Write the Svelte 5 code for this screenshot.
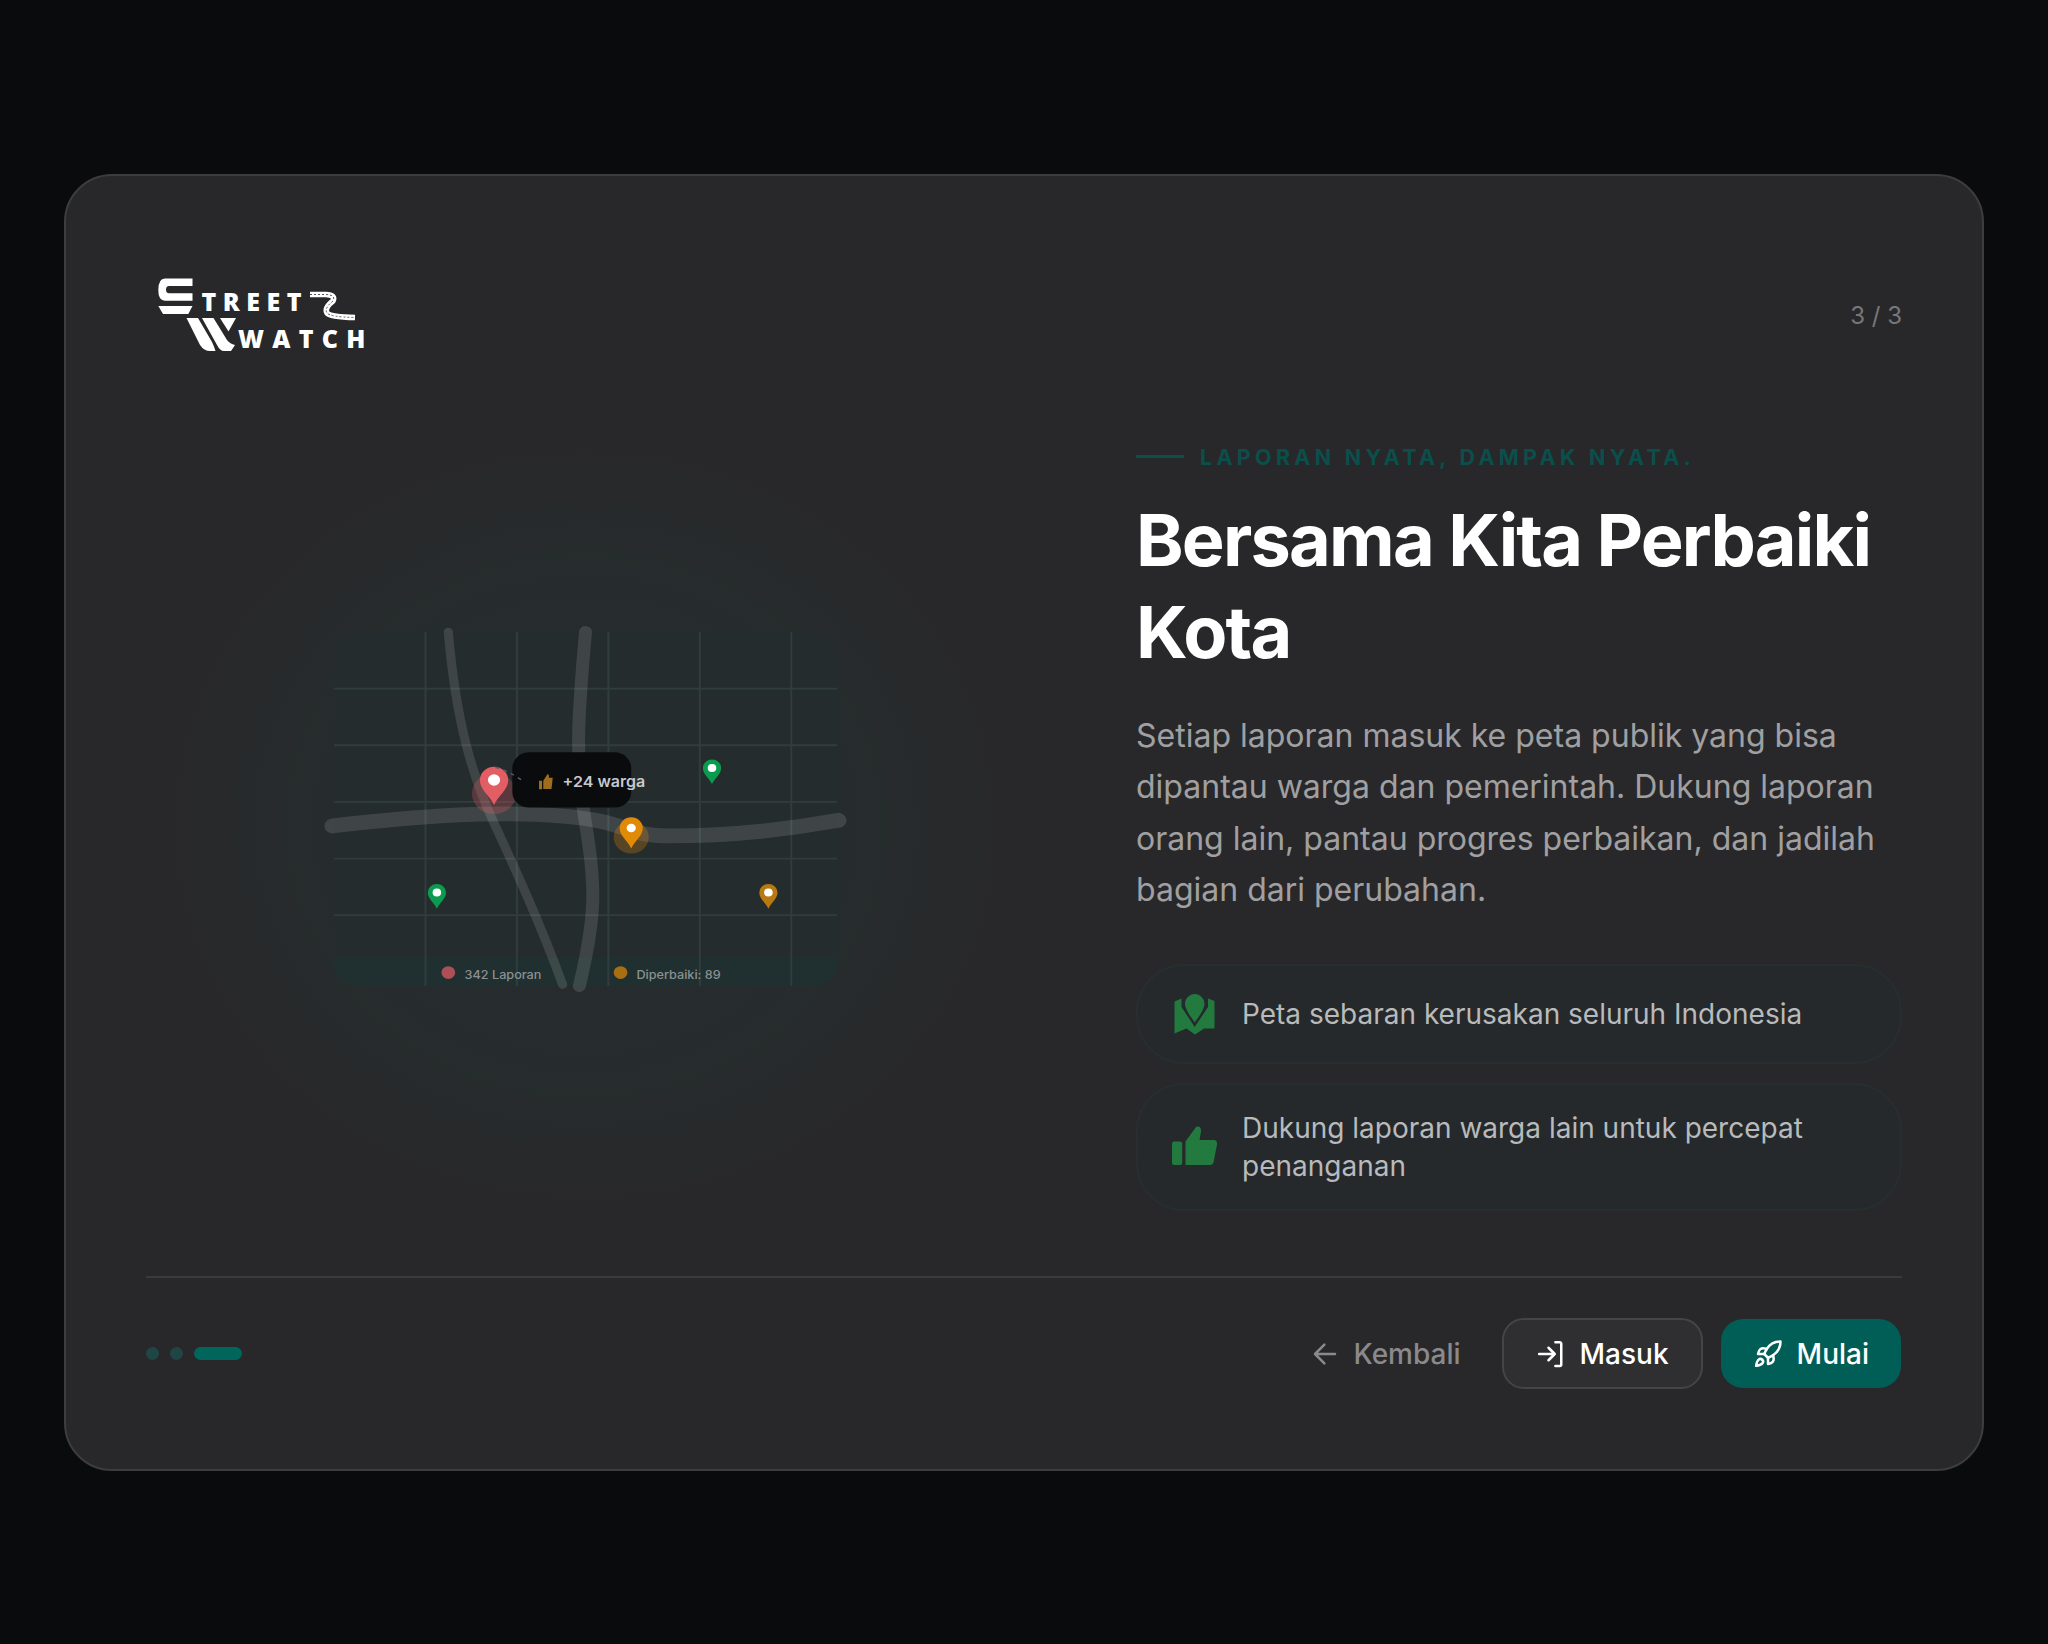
<script>
  // map pins in map coordinates (viewBox 330 x 250)
  const pins = [
    { x: 105, y: 104.5, r: 9.3, color: '#e35d65', dot: 4, halo: { y: 114, r: 14.5 } },
    { x: 195, y: 138.5, r: 7.6, color: '#e08a08', dot: 3, halo: { y: 145, r: 11.5 } },
    { x: 248, y: 96, r: 6, color: '#0b9b4f', dot: 2.8 },
    { x: 67.5, y: 184, r: 6, color: '#0b9b4f', dot: 2.8 },
    { x: 285, y: 184, r: 6, color: '#b87a10', dot: 2.8 }
  ];

  const gridX = [60, 120, 180, 240, 300];
  const gridY = [40, 80, 120, 160, 200];

  function pinPath(p) {
    const { x, y, r } = p;
    const tip = r * 1.9;
    return `M${x} ${y + tip}C${x - r * 0.3} ${y + tip * 0.62} ${x - r} ${y + r * 0.75} ${x - r} ${y}A${r} ${r} 0 0 1 ${x + r} ${y}C${x + r} ${y + r * 0.75} ${x + r * 0.3} ${y + tip * 0.62} ${x} ${y + tip}Z`;
  }
</script>

<div class="page">
  <div class="card">
    <header class="top">
      <svg class="logo" viewBox="16 6 220 118" aria-label="Street Watch">
        <path class="logo-fill" d="M35 28.500H62.500V36H39Q36 36 36 39.500Q36 43.300 39 43.300H62.500V50.700H35Q28.300 50.700 28.300 40Q28.300 28.500 35 28.500Z" />
        <path class="logo-fill" d="M28.300 56H62.500L58.300 64H33Z" />
        <path class="logo-fill" d="M56.500 68H68L82 92Q84 96 85.500 101H80Q74 101 70 95Z" />
        <path class="logo-fill" d="M72 68H83.500L97 90Q100 94 105 95L101 101H94Q90 101 87 95Z" />
        <path class="logo-fill" d="M90 68H106L98.500 81.500Z" />
        <text class="logo-text" x="71.500" y="61">TREET</text>
        <text class="logo-text wide" x="108" y="98">WATCH</text>
        <path class="logo-road" d="M180 44.500H196Q206 45 203 51Q194 58 197 63Q200 67 225 67.500" />
        <path class="logo-road-line" d="M180 44.500H196Q206 45 203 51Q194 58 197 63Q200 67 225 67.500" />
      </svg>
      <span class="count">3 / 3</span>
    </header>

    <main class="content">
      <div class="visual">
        <svg class="map" viewBox="0 0 330 250" preserveAspectRatio="none">
          <rect class="map-bg" width="330" height="250" rx="16" />
          <path class="map-legend-bg" d="M0 230H330V234A16 16 0 0 1 314 250H16A16 16 0 0 1 0 234Z" />
          {#each gridX as x}
            <line class="grid" x1={x} y1="0" x2={x} y2="250" />
          {/each}
          {#each gridY as y}
            <line class="grid" x1="0" y1={y} x2="330" y2={y} />
          {/each}
          <path class="road" stroke-width="10.500" d="M-1 137C55 130 105 126 150 130S190 144 220 144S290 141 331 133" />
          <path class="road" stroke-width="6" d="M75 0C80 62 90 100 105 135S135 205 150 249" />
          <path class="road" stroke-width="8.500" d="M165 0C160 60 158 90 165 135S172 200 161 250" />

          {#each pins as p}
            {#if p.halo}
              <circle cx={p.x} cy={p.halo.y} r={p.halo.r} fill={p.color} opacity="0.28" />
            {/if}
            <path d={pinPath(p)} fill={p.color} />
            <circle cx={p.x} cy={p.y} r={p.dot} fill="#fff" />
          {/each}

          <rect class="tip" x="117" y="85" width="78" height="39" rx="11" />
          <path class="tip-line" d="M106 95.500Q114 98 123 104.500" />
          <path class="tip-thumb" d="M134.500 105H136.500V111H134.500ZM137.300 105L140 100.500Q141.300 100.200 141 103H143.500L142.700 110.800H137.300Z" />
          <text class="tip-text" x="150" y="109.500">+24 warga</text>

          <circle cx="75" cy="240.500" r="4.500" fill="#ad4f58" />
          <text class="legend" x="85.700" y="245.200">342 Laporan</text>
          <circle cx="188" cy="240.500" r="4.500" fill="#a86f12" />
          <text class="legend" x="198.400" y="245.200">Diperbaiki: 89</text>
        </svg>
      </div>

      <div class="copy">
        <div class="eyebrow"><span class="dash"></span>LAPORAN NYATA, DAMPAK NYATA.</div>
        <h1>Bersama Kita Perbaiki Kota</h1>
        <p class="lead">Setiap laporan masuk ke peta publik yang bisa dipantau warga dan pemerintah. Dukung laporan orang lain, pantau progres perbaikan, dan jadilah bagian dari perubahan.</p>
        <div class="features">
          <div class="feature">
            <svg class="feature-icon" viewBox="0 0 48 48">
              <path d="M4.500 11.500L11.500 8.500V17L24.700 37L38 17V8.500L44.500 11V38.500L34 38.500L25 44.500L16.500 38.500L4.500 43.500Z" />
              <path d="M24.700 4C30 4 34.500 8.500 34.500 14C34.500 19 28 28 24.700 32.500C21.500 28 15 19 15 14C15 8.500 19.500 4 24.700 4Z" />
            </svg>
            <span>Peta sebaran kerusakan seluruh Indonesia</span>
          </div>
          <div class="feature">
            <svg class="feature-icon" viewBox="0 0 48 48">
              <rect x="2" y="18.500" width="10.200" height="23.500" rx="2" />
              <path d="M15.500 18.500L26 4C29 2.500 31.500 4.500 31 8.500L29.500 17H43.500C46 17 47.500 19 47 21.500L43.500 39.500C43 41 41.500 42 40 42H15.500Z" />
            </svg>
            <span>Dukung laporan warga lain untuk percepat penanganan</span>
          </div>
        </div>
      </div>
    </main>

    <footer class="bottom">
      <div class="dots">
        <span class="dot"></span>
        <span class="dot"></span>
        <span class="dot active"></span>
      </div>
      <div class="actions">
        <button class="btn back">
          <svg viewBox="0 0 24 24"><path d="M20 12H4m7.500 7.500L4 12l7.500-7.500" /></svg>
          Kembali
        </button>
        <button class="btn login">
          <svg viewBox="0 0 24 24"><path d="M15.500 2.500h3.500a1.200 1.200 0 0 1 1.200 1.200v16.600a1.200 1.200 0 0 1-1.200 1.200h-3.500M10 17l5-5-5-5M15 12H2.500" /></svg>
          Masuk
        </button>
        <button class="btn start">
          <svg viewBox="0 0 24 24">
            <path d="M4.500 16.500c-1.500 1.260-2 5-2 5s3.740-.5 5-2c.710-.840.700-2.130-.090-2.910a2.180 2.180 0 0 0-2.910-.090z" />
            <path d="m12 15-3-3a22 22 0 0 1 2-3.950A12.880 12.880 0 0 1 22 2c0 2.720-.780 7.500-6 11a22.350 22.350 0 0 1-4 2z" />
            <path d="M9 12H4s.550-3.030 2-4c1.620-1.080 5 0 5 0" />
            <path d="M12 15v5s3.030-.550 4-2c1.080-1.620 0-5 0-5" />
          </svg>
          Mulai
        </button>
      </div>
    </footer>
  </div>
</div>

<style>
  :global(body) {
    margin: 0;
    background: #090b0d;
    font-family: Inter, "Liberation Sans", sans-serif;
  }

  .page {
    box-sizing: border-box;
    min-height: 1644px;
    padding-top: 1px;
    display: flex;
    align-items: center;
    justify-content: center;
  }

  .card {
    box-sizing: border-box;
    width: 1920px;
    height: 1297px;
    padding: 80px;
    display: flex;
    flex-direction: column;
    background: #28282a;
    border: 2px solid #3d3d3f;
    border-radius: 48px;
  }

  .top {
    height: 118px;
    display: flex;
    align-items: center;
    justify-content: space-between;
  }

  .logo {
    width: 220px;
    height: 118px;
    overflow: visible;
  }

  .logo-fill {
    fill: #fff;
  }

  .logo-text {
    font-family: "Open Sans", sans-serif;
    font-weight: 800;
    font-size: 25px;
    letter-spacing: 6.500px;
    fill: #fff;
  }

  .logo-text.wide {
    letter-spacing: 8.300px;
  }

  .logo-road {
    fill: none;
    stroke: #fff;
    stroke-width: 5.500;
  }

  .logo-road-line {
    fill: none;
    stroke: #555;
    stroke-width: 1;
    stroke-dasharray: 2 2;
  }

  .count {
    font-size: 24px;
    color: #77777a;
  }

  .content {
    flex: 1;
    display: flex;
    align-items: center;
    justify-content: space-between;
    min-height: 0;
  }

  .visual {
    width: 879px;
    height: 800px;
    flex: none;
    display: flex;
    align-items: center;
    justify-content: center;
    padding-bottom: 32px;
    box-sizing: border-box;
    background: radial-gradient(closest-side, rgba(0, 120, 110, 0.055) 55%, rgba(0, 120, 110, 0));
  }

  .map {
    width: 503px;
    height: 354px;
    overflow: visible;
  }

  .map-bg {
    fill: #252c2e;
  }

  .map-legend-bg {
    fill: #203030;
  }

  .grid {
    stroke: #303d3e;
    stroke-width: 1.300;
  }

  .road {
    fill: none;
    stroke: rgba(255, 255, 255, 0.12);
    stroke-linecap: round;
  }

  .tip {
    fill: #090b0d;
  }

  .tip-line {
    fill: none;
    stroke: #5a5d60;
    stroke-width: 1;
    stroke-dasharray: 2.500 3;
  }

  .tip-thumb {
    fill: #a06c1e;
  }

  .tip-text {
    font-size: 10.500px;
    font-weight: 600;
    fill: #c5c9cd;
  }

  .legend {
    font-size: 8.300px;
    font-weight: 500;
    fill: #8a9093;
  }

  .copy {
    width: 766px;
    flex: none;
    padding-top: 5px;
  }

  .eyebrow {
    display: flex;
    align-items: center;
    gap: 16px;
    font-size: 21.500px;
    font-weight: 700;
    letter-spacing: 0.2em;
    color: #0a4f4b;
    line-height: 24px;
  }

  .dash {
    width: 48px;
    height: 3px;
    background: #0a4f4b;
  }

  h1 {
    margin: 25px 0 32px;
    font-size: 72px;
    font-weight: 700;
    line-height: 92px;
    letter-spacing: -0.025em;
    color: #fff;
  }

  .lead {
    margin: 0 0 48px;
    font-size: 32px;
    line-height: 51.500px;
    color: #a0a0a2;
  }

  .features {
    display: flex;
    flex-direction: column;
    gap: 19px;
  }

  .feature {
    display: flex;
    align-items: center;
    gap: 24px;
    padding: 24px 32px;
    background: #25292b;
    border: 2px solid #272e30;
    border-radius: 48px;
    font-size: 28px;
    line-height: 38px;
    color: #b8babc;
  }

  .feature-icon {
    width: 48px;
    height: 48px;
    flex: none;
    fill: #237a3f;
  }

  .bottom {
    margin-top: auto;
    border-top: 2px solid #3a3a3c;
    padding-top: 40px;
    display: flex;
    align-items: center;
    justify-content: space-between;
  }

  .dots {
    display: flex;
    align-items: center;
    gap: 11px;
  }

  .dot {
    width: 13px;
    height: 13px;
    border-radius: 7px;
    background: #1f4644;
  }

  .dot.active {
    width: 48px;
    background: #00665c;
  }

  .actions {
    display: flex;
    align-items: center;
    gap: 18px;
    margin-right: 1px;
  }

  .btn {
    display: flex;
    align-items: center;
    gap: 14px;
    height: 69px;
    padding: 0 32px;
    box-sizing: border-box;
    border: none;
    border-radius: 22px;
    font-family: inherit;
    font-size: 28px;
    font-weight: 500;
    background: none;
    color: #fff;
  }

  .btn svg {
    width: 30px;
    height: 30px;
    fill: none;
    stroke: currentColor;
    stroke-width: 2;
    stroke-linecap: round;
    stroke-linejoin: round;
  }

  .back {
    color: #8a8a8c;
    padding: 0 23px 0 24px;
  }

  .login {
    height: 71px;
    background: #2f2f31;
    border: 2px solid #454547;
  }

  .start {
    background: #005e57;
  }
</style>
